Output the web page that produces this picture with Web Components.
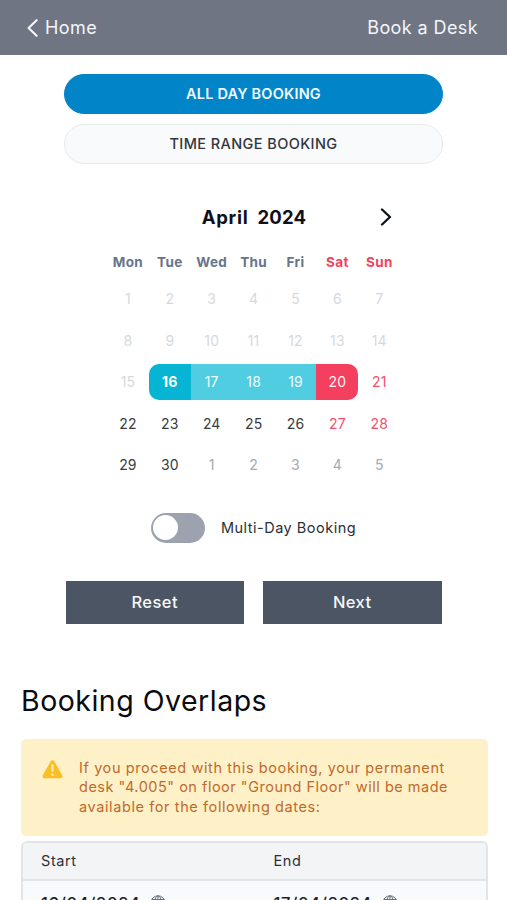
<!DOCTYPE html>
<html lang="en">
<head>
<meta charset="utf-8">
<title>Book a Desk</title>
<style>
  body {
    margin: 0;
    height: 900px;
    overflow: hidden;
    background: #fff;
    font-family: Inter, "Open Sans", sans-serif;
  }
</style>
</head>
<body>
<desk-header back="Home">Book a Desk</desk-header>
<booking-form>
  <booking-tab active style="letter-spacing:.2px">ALL DAY BOOKING</booking-tab>
  <booking-tab style="letter-spacing:.4px">TIME RANGE BOOKING</booking-tab>
  <month-calendar slot="calendar"></month-calendar>
  <toggle-switch slot="options">Multi-Day Booking</toggle-switch>
  <form-button slot="actions">Reset</form-button>
  <form-button slot="actions">Next</form-button>
</booking-form>
<booking-overlaps heading="Booking Overlaps">
  <alert-box>
    <div style="letter-spacing:.6px">If you proceed with this booking, your permanent</div>
    <div style="letter-spacing:.51px">desk "4.005" on floor "Ground Floor" will be made</div>
    <div style="letter-spacing:.6px">available for the following dates:</div>
  </alert-box>
  <overlap-table start="16/04/2024" end="17/04/2024"></overlap-table>
</booking-overlaps>

<script>
// ----------------------------
// Base element
// ----------------------------

class BaseElement extends HTMLElement {
  constructor() {
    super();
    this.attachShadow({ mode: "open" });
  }

  connectedCallback() {
    this.shadowRoot.innerHTML = this.render();
  }
}

// ----------------------------
// Header
// ----------------------------

class DeskHeader extends BaseElement {
  render() {
    return `
<style>
:host {
  display: flex;
  justify-content: space-between;
  align-items: center;
  box-sizing: border-box;
  height: 54.5px;
  padding: 1px 29px 0 27px;
  background: #6f7582;
  color: #f4f6fa;
  font-size: 18px;
  letter-spacing: .4px;
}
a { display: flex; align-items: center; gap: 7px; }
svg { display: block; }
</style>
<a>
  <svg width="11" height="18" viewBox="0 0 11 18" fill="none" stroke="currentColor" stroke-width="2.1" stroke-linecap="round" stroke-linejoin="round"><path d="M9.6 1.2 1.6 9l8 7.8"/></svg>
  <span>${this.getAttribute("back")}</span>
</a>
<span class="title"><slot></slot></span>`;
  }
}

customElements.define("desk-header", DeskHeader);

// ----------------------------
// Booking form
// ----------------------------

class BookingForm extends BaseElement {
  render() {
    return `
<style>
:host { display: block; padding: 19.5px 64px 0; }
.tabs { display: flex; flex-direction: column; gap: 10px; }
.options { display: flex; justify-content: center; margin-top: 29.5px; }
.actions { display: flex; gap: 19px; margin: 38.5px 1.5px 0; }
</style>
<div class="tabs"><slot></slot></div>
<slot name="calendar"></slot>
<div class="options"><slot name="options"></slot></div>
<div class="actions"><slot name="actions"></slot></div>`;
  }
}

customElements.define("booking-form", BookingForm);

class BookingTab extends BaseElement {
  render() {
    return `
<style>
:host {
  display: flex;
  align-items: center;
  justify-content: center;
  box-sizing: border-box;
  height: 40px;
  padding-bottom: 2px;
  border: 1.5px solid #e8eaec;
  border-radius: 20px;
  background: #f9fafb;
  color: #33373d;
  font-size: 14.5px;
  font-weight: 500;
}
:host([active]) { background: #0284c9; border-color: #0284c9; color: #eef8fd; font-weight: 600; }
</style>
<slot></slot>`;
  }
}

customElements.define("booking-tab", BookingTab);

// ----------------------------
// Calendar
// ----------------------------

class MonthCalendar extends BaseElement {
  render() {
    const names = ["Mon", "Tue", "Wed", "Thu", "Fri", "Sat", "Sun"];
    let cells = names.map((n) => `<b>${n}</b>`).join("");

    for (let i = 1; i <= 35; i++) {
      let cls = "";
      if (i < 16) cls = "past";
      else if (i === 16) cls = "start";
      else if (i < 20) cls = "range";
      else if (i === 20) cls = "end";
      else if (i > 30) cls = "next";
      else if (i % 7 === 6 || i % 7 === 0) cls = "weekend";
      cells += `<span class="${cls}">${i > 30 ? i - 30 : i}</span>`;
    }

    return `
<style>
:host { display: block; width: 294px; margin: 39.5px auto 0; padding-left: 1px; }
header {
  display: grid;
  grid-template-columns: 1fr auto 1fr;
  align-items: center;
  height: 26px;
  color: #0d101d;
  font-size: 18.5px;
  font-weight: 700;
}
header div { grid-column: 2; display: flex; gap: 9px; }
header div span:first-child { letter-spacing: .7px; }
header div span:last-child { letter-spacing: .2px; }
svg { display: block; justify-self: end; margin-right: 9px; }
.grid { display: grid; grid-template-columns: repeat(7, 41.9px); row-gap: 5px; margin-top: 14px; }
b, span { display: flex; align-items: center; justify-content: center; }
b { height: 36px; margin-bottom: -4px; color: #66758b; font-size: 13.5px; font-weight: 700; letter-spacing: .35px; }
b:nth-child(6), b:nth-child(7) { color: #f43f5e; }
.grid span { height: 36.5px; font-size: 14px; color: #383c42; letter-spacing: .15px; }
.grid .past { color: #d5d9de; }
.grid .next { color: #a3aab5; }
.grid .weekend { color: #f2506c; }
.grid .start { background: #06b5d4; color: #fff; font-weight: 700; border-radius: 10px 0 0 10px; }
.grid .range { background: #51cde1; color: #eefcff; }
.grid .end { background: #f43f5e; color: #fff0f2; border-radius: 0 10px 10px 0; }
</style>
<header>
  <div><span>April</span><span>2024</span></div>
  <svg width="12" height="18" viewBox="0 0 12 18" fill="none" stroke="currentColor" stroke-width="2.3" stroke-linecap="round" stroke-linejoin="round"><path d="M2 1.5 10 9l-8 7.5"/></svg>
</header>
<div class="grid">${cells}</div>`;
  }
}

customElements.define("month-calendar", MonthCalendar);

// ----------------------------
// Toggle and buttons
// ----------------------------

class ToggleSwitch extends BaseElement {
  render() {
    return `
<style>
:host { display: flex; align-items: center; gap: 16px; color: #2b2f35; font-size: 14.5px; letter-spacing: .5px; }
.track { box-sizing: border-box; width: 54px; height: 30px; padding: 2.5px; border-radius: 15px; background: #9ca3af; }
.knob { width: 25px; height: 25px; border-radius: 50%; background: #fff; }
</style>
<div class="track"><div class="knob"></div></div>
<span><slot></slot></span>`;
  }
}

customElements.define("toggle-switch", ToggleSwitch);

class FormButton extends BaseElement {
  render() {
    return `
<style>
:host {
  display: flex;
  flex: 1;
  align-items: center;
  justify-content: center;
  box-sizing: border-box;
  height: 43px;
  padding-bottom: 1px;
  background: #4b5563;
  color: #f4f8fd;
  font-size: 16.5px;
  font-weight: 500;
  letter-spacing: .45px;
}
</style>
<slot></slot>`;
  }
}

customElements.define("form-button", FormButton);

// ----------------------------
// Overlaps
// ----------------------------

class BookingOverlaps extends BaseElement {
  render() {
    return `
<style>
:host { display: block; padding: 0 19px 0 21px; margin-top: 56.5px; }
h2 { margin: 0 0 18px; color: #0b0b0d; font-size: 28.5px; line-height: 40px; font-weight: 400; letter-spacing: .5px; }
</style>
<h2>${this.getAttribute("heading")}</h2>
<slot></slot>`;
  }
}

customElements.define("booking-overlaps", BookingOverlaps);

class AlertBox extends BaseElement {
  render() {
    return `
<style>
:host {
  display: flex;
  box-sizing: border-box;
  gap: 16px;
  height: 97px;
  padding: 19px 20px 0 21px;
  border-radius: 5px;
  background: #fef1c7;
  color: #c0692d;
  font-size: 14.5px;
  line-height: 19.5px;
  white-space: nowrap;
}
svg { flex: none; margin-top: 2px; }
</style>
<svg width="21" height="19" viewBox="0 0 21 19"><path d="M8.7 1.2c.8-1.4 2.8-1.4 3.6 0l7.9 14c.8 1.4-.2 3.1-1.8 3.1H2.6C1 18.3 0 16.6.8 15.2z" fill="#fbbf24"/><path d="M10.5 5.3v5.5" stroke="#fef1c7" stroke-width="1.9" stroke-linecap="round"/><circle cx="10.5" cy="14.7" r="1.2" fill="#fef1c7"/></svg>
<div><slot></slot></div>`;
  }
}

customElements.define("alert-box", AlertBox);

class OverlapTable extends BaseElement {
  render() {
    const globe = `<svg width="16" height="16" viewBox="0 0 16 16" fill="none" stroke="#6c7078" stroke-width="1"><circle cx="8" cy="8" r="7.2"/><ellipse cx="8" cy="8" rx="3.4" ry="7.2"/><path d="M8 1v14M1 8h14M2 4.5h12M2 11.5h12"/></svg>`;

    return `
<style>
:host {
  display: block;
  margin-top: 5px;
  border: 2px solid #e2e4e7;
  border-radius: 6px 6px 0 0;
  background: #f9fafb;
  overflow: hidden;
  color: #2b2f38;
  font-size: 14.5px;
  letter-spacing: .6px;
}
.row { display: grid; grid-template-columns: 232.5px 1fr; align-items: center; padding-left: 18px; }
.head { height: 36px; background: #f3f4f6; border-bottom: 2px solid #e2e4e7; }
.body { height: 44px; color: #1b1f29; font-size: 16.5px; font-weight: 500; letter-spacing: .7px; }
.body div { display: flex; align-items: center; gap: 10px; }
</style>
<div class="row head"><span>Start</span><span>End</span></div>
<div class="row body">
  <div><span>${this.getAttribute("start")}</span>${globe}</div>
  <div><span>${this.getAttribute("end")}</span>${globe}</div>
</div>`;
  }
}

customElements.define("overlap-table", OverlapTable);
</script>
</body>
</html>
